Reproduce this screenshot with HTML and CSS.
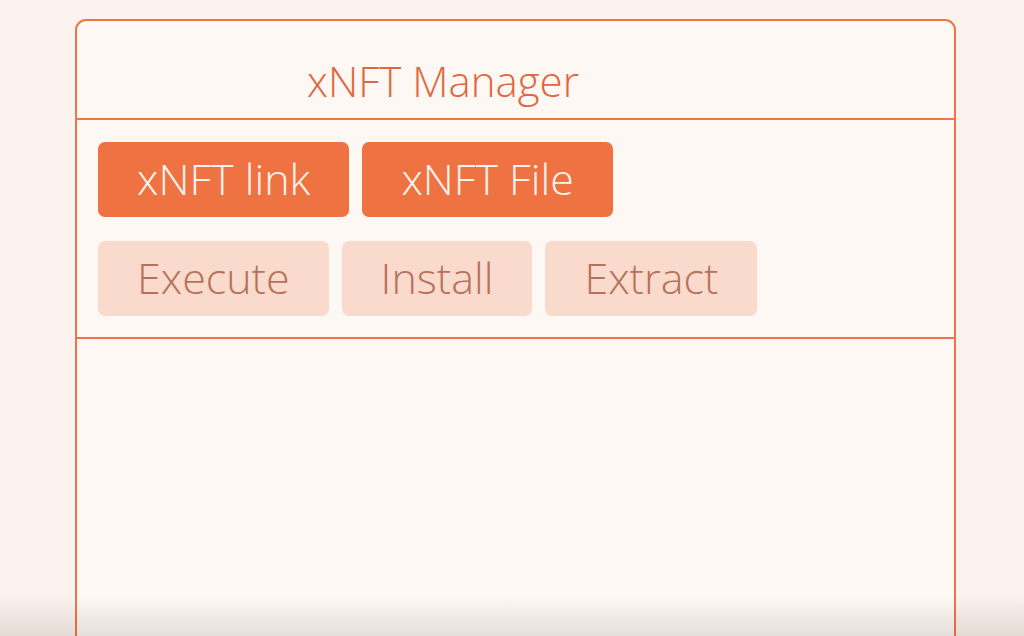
FILE: index.html
```html
<!DOCTYPE html>
<html lang="en">
<head>
    <meta charset="UTF-8">
    <meta name="viewport" content="width=device-width, initial-scale=1.0">
    <title>xNFT Manager</title>
    <link rel="stylesheet" href="styles.css">
</head>
<body>
    <div class="manager">
        <div class="header">
            <h1 class="title">xNFT Manager</h1>
        </div>
        <div class="actions">
            <div class="row">
                <button class="btn primary">xNFT link</button>
                <button class="btn primary">xNFT File</button>
            </div>
            <div class="row">
                <button class="btn muted">Execute</button>
                <button class="btn muted">Install</button>
                <button class="btn muted">Extract</button>
            </div>
        </div>
        <div class="output"></div>
    </div>
    <div class="shade"></div>
</body>
</html>
```

FILE: styles.css
```css
html, body {
    height: 100%;
    overflow: hidden;
}
body {
    margin: 0;
    background-color: #fcf3ee;
    font-family: "Open Sans", "Noto Sans", sans-serif;
}
.manager {
    margin: 19px 0 0 75px;
    width: 877px;
    min-height: 700px;
    border: 2px solid #f07545;
    border-radius: 11px;
    background-color: #fdf8f4;
}
.header {
    height: 97px;
    border-bottom: 2px solid #f07545;
    display: flex;
    align-items: center;
    padding-left: 230px;
}
.title {
    margin: 0;
    padding-top: 22px;
    font-size: 42px;
    font-weight: 350;
    color: #df683e;
}
.actions {
    padding: 22px 21px 21px;
    border-bottom: 2px solid #f07545;
    display: flex;
    flex-direction: column;
    gap: 24px;
}
.row {
    display: flex;
    gap: 13px;
}
.btn {
    height: 75px;
    padding: 0 39px 2px;
    border: none;
    border-radius: 7px;
    font-family: inherit;
    font-size: 43px;
    font-weight: 350;
    cursor: pointer;
}
.primary {
    background-color: #ef7242;
    color: #fdf3ee;
}
.muted {
    background-color: #fadacd;
    color: #b5735a;
}
.shade {
    position: fixed;
    left: 0;
    right: 0;
    bottom: 0;
    height: 40px;
    background: linear-gradient(to bottom, rgba(60, 40, 30, 0), rgba(60, 40, 30, 0.12));
    pointer-events: none;
}
```
